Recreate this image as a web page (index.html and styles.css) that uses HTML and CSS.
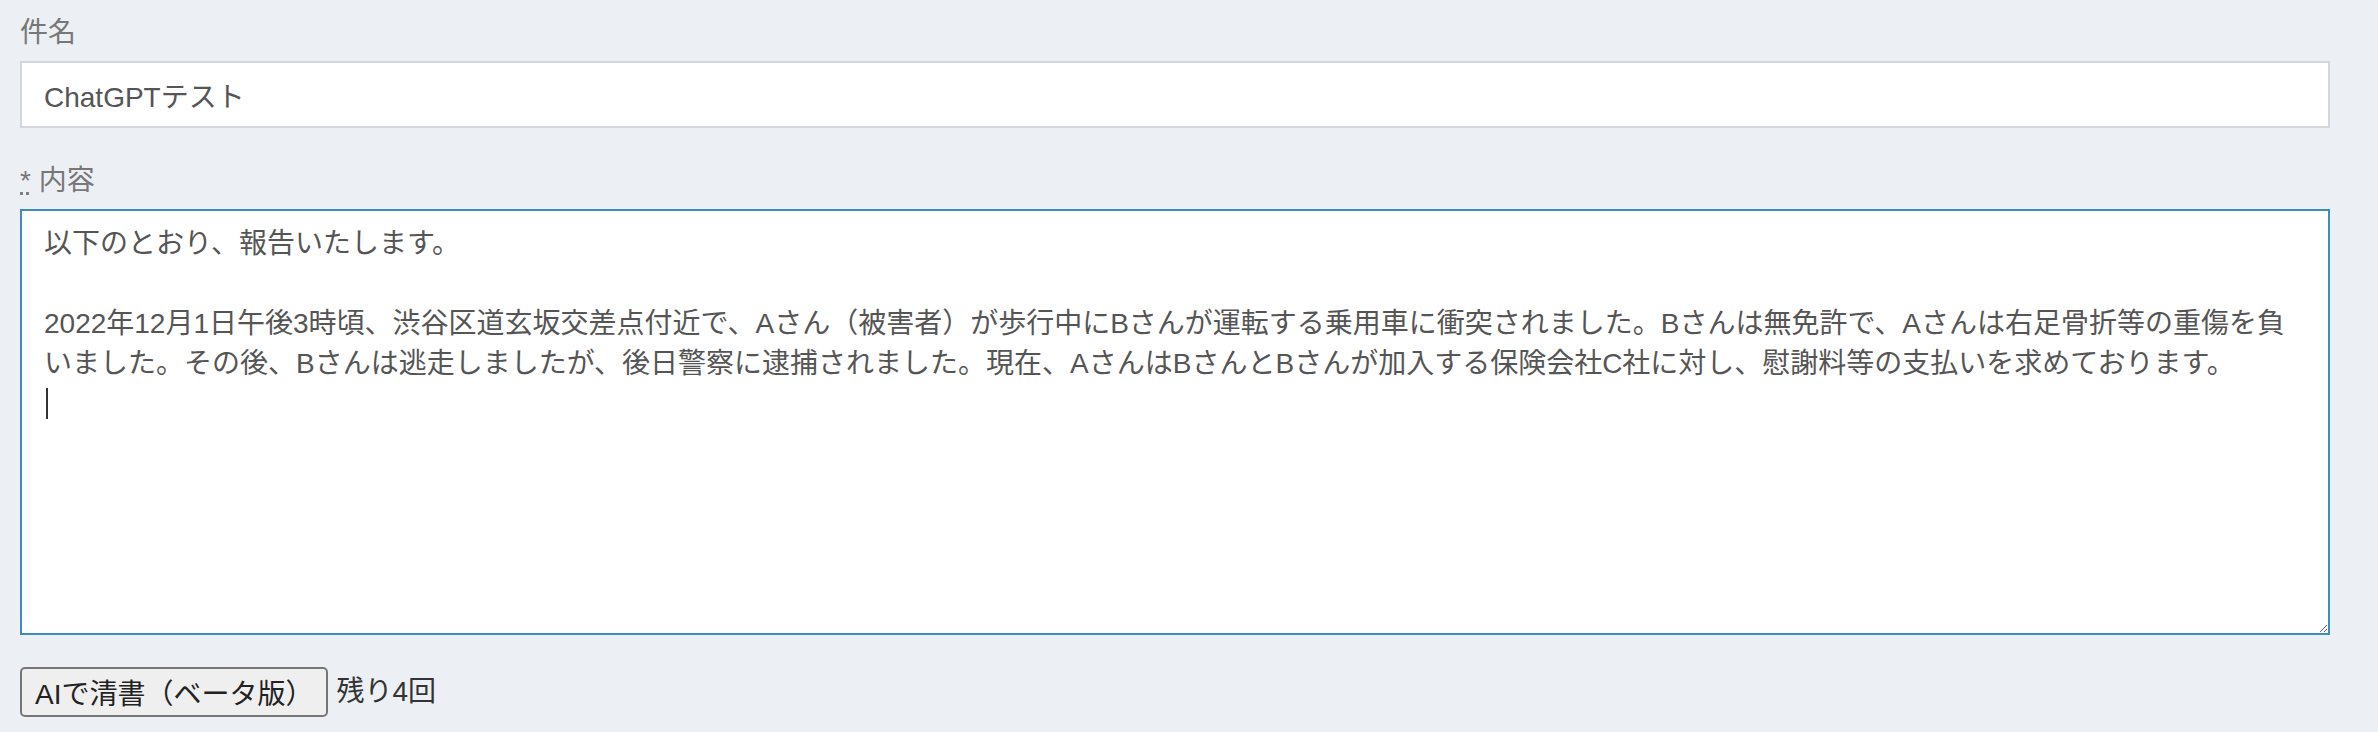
FILE: index.html
```html
<!DOCTYPE html>
<html lang="ja">

<head>
  <meta charset="UTF-8">
  <meta name="viewport" content="width=device-width, initial-scale=1.0">
  <title>報告</title>
  <link rel="stylesheet" href="styles.css">
</head>

<body>
  <form class="report-form">
    <div class="form-group">
      <label for="subject">件名</label>
      <input type="text" id="subject" class="form-control" value="ChatGPTテスト">
    </div>

    <div class="form-group">
      <label for="body"><abbr title="必須">*</abbr> 内容</label>
      <div class="textarea-wrap">
        <textarea id="body" class="form-control body-text">以下のとおり、報告いたします。

2022年12月1日午後3時頃、渋谷区道玄坂交差点付近で、Aさん（被害者）が歩行中にBさんが運転する乗用車に衝突されました。Bさんは無免許で、Aさんは右足骨折等の重傷を負いました。その後、Bさんは逃走しましたが、後日警察に逮捕されました。現在、AさんはBさんとBさんが加入する保険会社C社に対し、慰謝料等の支払いを求めております。
</textarea>
        <span class="caret"></span>
      </div>
    </div>

    <div class="ai-row">
      <button type="button" class="ai-button">AIで清書（ベータ版）</button>
      <span class="remaining">残り4回</span>
    </div>
  </form>
</body>

</html>
```

FILE: styles.css
```css
body {
  font-family: 'Liberation Sans', 'Noto Sans CJK JP', sans-serif;
  font-size: 28px;
  line-height: 40px;
  margin: 0;
  padding: 0;
  background-color: #ecf0f5;
  color: #333333;
}

.report-form {
  padding: 13px 48px 0 20px;
}

.form-group {
  margin-bottom: 33px;
}

.form-group label {
  display: block;
  color: #777777;
  margin-bottom: 8px;
}

.form-group abbr {
  text-decoration: underline dotted;
}

.form-control {
  display: block;
  width: 100%;
  box-sizing: border-box;
  font-family: inherit;
  font-size: 28px;
  line-height: 40px;
  color: #555555;
  background-color: #FFFFFF;
  border: 2px solid #d2d6de; /* light gray field border */
  border-radius: 0;
  outline: none;
}

input.form-control {
  height: 67px;
  padding: 0 22px;
}

.textarea-wrap {
  position: relative;
}

.body-text {
  height: 426px;
  padding: 13px 22px 11px;
  border-color: #3c8dbc; /* focused field */
  resize: both;
}

/* text cursor shown in the focused textarea */
.caret {
  position: absolute;
  left: 26px;
  top: 179px;
  width: 2px;
  height: 31px;
  background-color: #333333;
}

.ai-row {
  display: flex;
  align-items: center;
  gap: 8px;
  margin-top: -1px;
}

.ai-button {
  font-family: inherit;
  font-size: 28px;
  height: 50px;
  padding: 0 13px 0 13px;
  color: #222222;
  background-color: #efefef;
  border: 2px solid #767676;
  border-radius: 5px;
}

.remaining {
  color: #333333;
}
```
